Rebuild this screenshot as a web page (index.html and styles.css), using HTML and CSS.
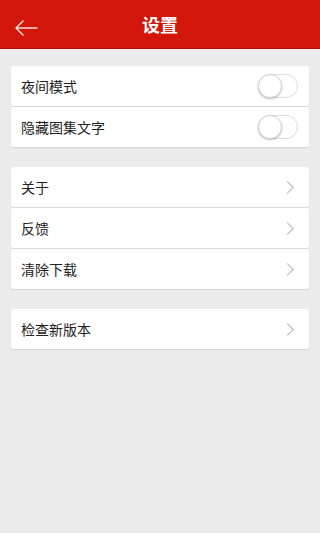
FILE: index.html
```html
<!DOCTYPE html>
<html>
<head>
<meta charset="utf-8">
<title>设置</title>
<link rel="stylesheet" href="styles.css">
</head>
<body>
<div class="header">
	<span class="back">
		<svg width="24" height="16" viewBox="0 0 24 16"><path d="M23 8H2M9 1L2 8l7 7" fill="none" stroke="#f6d8d4" stroke-width="1.5" stroke-linecap="round" stroke-linejoin="round"/></svg>
	</span>
	<h1>设置</h1>
</div>
<ul class="group">
	<li><span>夜间模式</span><i class="switch"></i></li>
	<li><span>隐藏图集文字</span><i class="switch"></i></li>
</ul>
<ul class="group">
	<li><span>关于</span><i class="arrow"></i></li>
	<li><span>反馈</span><i class="arrow"></i></li>
	<li><span>清除下载</span><i class="arrow"></i></li>
</ul>
<ul class="group">
	<li><span>检查新版本</span><i class="arrow"></i></li>
</ul>
</body>
</html>
```
FILE: styles.css
```css
* {padding:0;margin:0;}
body {background:#ececec;font-family:"Noto Sans CJK SC","Liberation Sans",sans-serif;height:533px;}
/*标题栏*/
.header {height:48px;background:#d2160a;border-bottom:1px solid #b10f05;display:flex;align-items:center;justify-content:center;position:relative;}
.header h1 {font-size:18px;font-weight:bold;color:#fff;line-height:48px;}
.back {position:absolute;left:14px;top:17px;display:block;width:24px;height:16px;}
/*列表*/
.group {list-style:none;margin:17px 11px 0;display:flex;flex-direction:column;gap:1px;}
.group + .group {margin-top:20px;}
.group li {height:40px;background:#fff;border-radius:2px;box-shadow:0 1px 1px #d6d6d6;display:flex;align-items:center;justify-content:space-between;padding:0 11px 0 10px;font-size:14px;color:#222;}
.arrow {display:block;width:8px;height:8px;border-top:1.5px solid #b0b0b0;border-right:1.5px solid #b0b0b0;transform:rotate(45deg);margin-right:6px;}
/*开关*/
.switch {display:block;width:40px;height:24px;border:1px solid #ddd;border-radius:13px;box-sizing:border-box;position:relative;}
.switch:after {content:"";position:absolute;left:-1px;top:-1px;width:24px;height:24px;border-radius:50%;background:#fff;border:1px solid #d4d4d4;box-sizing:border-box;box-shadow:0 1px 2px rgba(0,0,0,0.25);}
```
